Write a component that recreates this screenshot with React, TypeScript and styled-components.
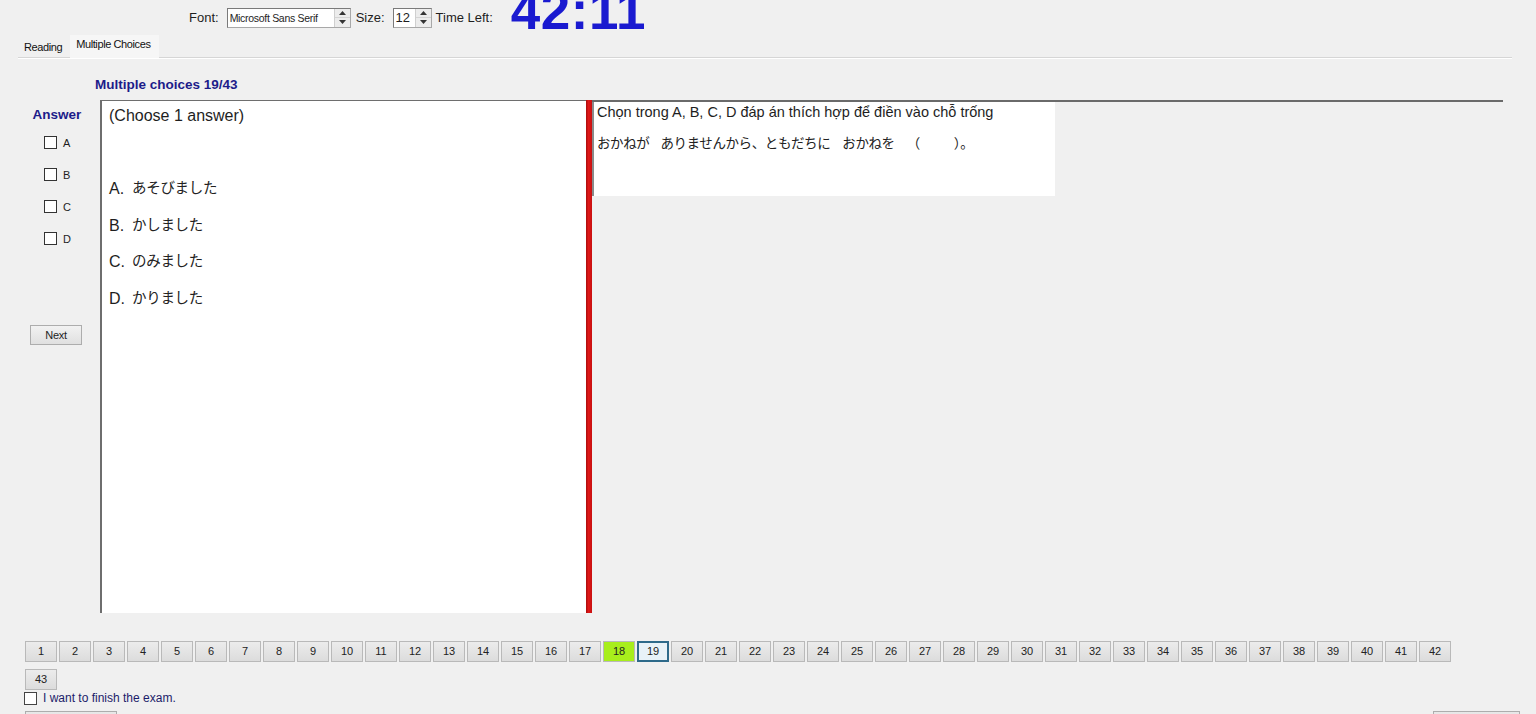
import React from 'react'
import styled, { createGlobalStyle } from 'styled-components'

const GlobalStyle = createGlobalStyle`
  html, body {
    margin: 0;
    padding: 0;
    background: #f0f0f0;
    overflow: hidden;
  }
  body {
    font-family: "Liberation Sans", Arial, sans-serif;
    color: #1e1e1e;
  }
`

const Page = styled.div`
  width: 1536px;
  height: 714px;
  display: flex;
  flex-direction: column;
  overflow: hidden;
  background: #f0f0f0;

  & > * {
    flex-shrink: 0;
  }
`

const TopBar = styled.div`
  height: 36px;
  display: flex;
  align-items: center;
  padding-left: 189px;
  font-size: 13px;
  color: #1e1e1e;
`

const TopLabel = styled.span<{ $ml?: number }>`
  margin-left: ${p => p.$ml ?? 0}px;
  margin-top: -1px;
`

const InputBox = styled.div<{ $w: number; $ml: number }>`
  width: ${p => p.$w}px;
  height: 20px;
  margin-left: ${p => p.$ml}px;
  margin-top: -1px;
  box-sizing: border-box;
  display: flex;
  background: #fff;
  border: 1px solid #a8a8a8;
  border-top-color: #7a7a7a;
  border-left-color: #7a7a7a;
`

const InputText = styled.span<{ $small?: boolean }>`
  flex: 1;
  font-size: ${p => (p.$small ? 10.5 : 13)}px;
  line-height: 18px;
  padding-left: 2px;
  letter-spacing: ${p => (p.$small ? '-0.3px' : '0')};
  white-space: nowrap;
  overflow: hidden;
`

const Spinner = styled.div`
  width: 15px;
  display: flex;
  flex-direction: column;
  background: #ececec;
  border-left: 1px solid #cfcfcf;
`

const SpinHalf = styled.div`
  flex: 1;
  display: flex;
  align-items: center;
  justify-content: center;
  border-bottom: 1px solid #d4d4d4;
  &:last-child { border-bottom: none; }
`

const Timer = styled.div`
  align-self: flex-start;
  margin-left: 18px;
  margin-top: -16px;
  font-size: 53px;
  line-height: 53px;
  font-weight: bold;
  color: #1a1ad0;
  letter-spacing: 0.5px;
`

const TabStrip = styled.div`
  height: 21px;
  margin: 0 24px 0 18px;
  display: flex;
  align-items: flex-end;
  border-bottom: 1px solid #d6d6d6;
  box-shadow: 0 1px 0 #ffffff;
`

const Tab = styled.div<{ $active?: boolean }>`
  font-size: 11px;
  letter-spacing: -0.4px;
  color: #111;
  padding: 0 8px 0 6px;
  height: ${p => (p.$active ? 23 : 17)}px;
  line-height: ${p => (p.$active ? 18 : 15)}px;
  background: ${p => (p.$active ? '#f6f6f6' : 'transparent')};
  margin-bottom: ${p => (p.$active ? -1 : 0)}px;
`

const TitleRow = styled.div`
  height: 42px;
  display: flex;
  align-items: center;
  padding-left: 95px;
  padding-top: 10px;
  box-sizing: border-box;
`

const Title = styled.span`
  font-weight: bold;
  font-size: 13.5px;
  color: #1c1c8a;
`

const Main = styled.div`
  height: 513px;
  display: flex;
`

const AnswerCol = styled.div`
  width: 100px;
  display: flex;
  flex-direction: column;
  align-items: center;
`

const AnswerTitle = styled.div`
  font-weight: bold;
  font-size: 13.5px;
  color: #1c1c8a;
  margin-top: 7px;
  margin-left: 14px;
`

const ChoiceList = styled.div`
  display: flex;
  flex-direction: column;
  gap: 19px;
  margin-top: 14px;
  align-self: flex-start;
  margin-left: 44px;
`

const ChoiceRow = styled.label`
  display: flex;
  align-items: center;
  gap: 6px;
  font-size: 11px;
  height: 13px;
`

const Box = styled.span`
  width: 11px;
  height: 11px;
  border: 1px solid #333;
  background: #fff;
  display: inline-block;
`

const NextButton = styled.div`
  margin-top: 80px;
  margin-left: 12px;
  width: 52px;
  height: 20px;
  box-sizing: border-box;
  border: 1px solid #adadad;
  background: linear-gradient(#f2f2f2, #e0e0e0);
  font-size: 11px;
  letter-spacing: -0.3px;
  line-height: 18px;
  text-align: center;
`

const QuestionBox = styled.div`
  width: 486px;
  box-sizing: border-box;
  background: #fff;
  border-left: 2px solid #6e6e6e;
  border-top: 1px solid #6e6e6e;
  padding: 5px 0 0 7px;
`

const Prompt = styled.div`
  font-size: 16px;
  line-height: 20px;
  margin-bottom: 43px;
`

const Option = styled.div`
  height: 36.5px;
  display: flex;
  align-items: center;
  font-size: 16px;
  line-height: 20px;
`

const OptionKey = styled.span`
  width: 23px;
  padding-top: 4px;
`

const Jp = styled.span`
  font-family: "Noto Sans CJK JP", "Liberation Sans", sans-serif;
  font-size: 14.5px;
  line-height: 20px;
  letter-spacing: -0.3px;
  color: #222;
`

const Splitter = styled.div`
  width: 6px;
  background: linear-gradient(90deg, #a80c0c, #e01818 40%, #c81010);
`

const RightArea = styled.div`
  width: 911px;
  border-top: 2px solid #6a6a6a;
  box-sizing: border-box;
`

const Passage = styled.div`
  width: 463px;
  height: 94px;
  background: #fff;
  box-sizing: border-box;
  padding: 1px 0 0 3px;
  border-left: 2px solid #8a8a8a;
`

const PassageLine = styled.div<{ $mt?: number }>`
  font-size: 14.5px;
  line-height: 18px;
  margin-top: ${p => p.$mt ?? 0}px;
  white-space: nowrap;
  display: flex;
  align-items: center;
`

const PassageJp = styled(Jp)`
  font-size: 13.5px;
  letter-spacing: -0.4px;
`

const Gap = styled.span<{ $w: number }>`
  display: inline-block;
  width: ${p => p.$w}px;
`

const Numbers = styled.div`
  margin: 28px 0 0 25px;
  width: 1430px;
  display: flex;
  flex-wrap: wrap;
  column-gap: 2px;
  row-gap: 7px;
`

const NumButton = styled.div<{ $state?: 'done' | 'current' }>`
  width: 32px;
  height: 21px;
  box-sizing: border-box;
  font-size: 11px;
  text-align: center;
  color: #222;
  border: ${p => (p.$state === 'current' ? '2px solid #2e6a8a' : '1px solid #b9b9b9')};
  line-height: ${p => (p.$state === 'current' ? 17 : 19)}px;
  background: ${p =>
    p.$state === 'done'
      ? '#a8ee1c'
      : p.$state === 'current'
      ? '#e8f2f8'
      : 'linear-gradient(#ececec, #dcdcdc)'};
`

const FinishRow = styled.label`
  margin: 1px 0 0 24px;
  display: flex;
  align-items: center;
  gap: 6px;
  font-size: 12px;
  color: #1c1c6a;
`

const FinishBox = styled(Box)`
  border-color: #444;
`

const BottomBar = styled.div`
  margin-top: 6px;
  display: flex;
  justify-content: space-between;
  padding: 0 16px 0 25px;
`

const BottomButton = styled.div<{ $w: number }>`
  width: ${p => p.$w}px;
  height: 22px;
  border: 1px solid #adadad;
  background: linear-gradient(#e8e8e8, #d8d8d8);
`

const Arrow = ({ up }: { up?: boolean }) => (
  <svg width="7" height="4" viewBox="0 0 7 4">
    <polygon points={up ? '0,4 7,4 3.5,0' : '0,0 7,0 3.5,4'} fill="#333" />
  </svg>
)

const SpinBox = () => (
  <Spinner>
    <SpinHalf><Arrow up /></SpinHalf>
    <SpinHalf><Arrow /></SpinHalf>
  </Spinner>
)

const options = [
  ['A.', 'あそびました'],
  ['B.', 'かしました'],
  ['C.', 'のみました'],
  ['D.', 'かりました'],
]

const App: React.FC = () => {
  const nums = Array.from({ length: 43 }, (_, i) => i + 1)
  return (
    <Page>
      <GlobalStyle />
      <TopBar>
        <TopLabel>Font:</TopLabel>
        <InputBox $w={124} $ml={8}>
          <InputText $small>Microsoft Sans Serif</InputText>
          <SpinBox />
        </InputBox>
        <TopLabel $ml={5}>Size:</TopLabel>
        <InputBox $w={39} $ml={8}>
          <InputText>12</InputText>
          <SpinBox />
        </InputBox>
        <TopLabel $ml={4}>Time Left:</TopLabel>
        <Timer>42:11</Timer>
      </TopBar>

      <TabStrip>
        <Tab>Reading</Tab>
        <Tab $active>Multiple Choices</Tab>
      </TabStrip>

      <TitleRow>
        <Title>Multiple choices 19/43</Title>
      </TitleRow>

      <Main>
        <AnswerCol>
          <AnswerTitle>Answer</AnswerTitle>
          <ChoiceList>
            {['A', 'B', 'C', 'D'].map(k => (
              <ChoiceRow key={k}>
                <Box />
                {k}
              </ChoiceRow>
            ))}
          </ChoiceList>
          <NextButton>Next</NextButton>
        </AnswerCol>

        <QuestionBox>
          <Prompt>(Choose 1 answer)</Prompt>
          {options.map(([k, v]) => (
            <Option key={k}>
              <OptionKey>{k}</OptionKey>
              <Jp>{v}</Jp>
            </Option>
          ))}
        </QuestionBox>

        <Splitter />

        <RightArea>
          <Passage>
            <PassageLine>Chọn trong A, B, C, D đáp án thích hợp để điền vào chỗ trống</PassageLine>
            <PassageLine $mt={11}>
              <PassageJp>おかねが</PassageJp>
              <Gap $w={11} />
              <PassageJp>ありませんから、ともだちに</PassageJp>
              <Gap $w={12} />
              <PassageJp>おかねを</PassageJp>
              <Gap $w={12} />
              <PassageJp>（</PassageJp>
              <Gap $w={34} />
              <PassageJp>）。</PassageJp>
            </PassageLine>
          </Passage>
        </RightArea>
      </Main>

      <Numbers>
        {nums.map(n => (
          <NumButton key={n} $state={n === 18 ? 'done' : n === 19 ? 'current' : undefined}>
            {n}
          </NumButton>
        ))}
      </Numbers>

      <FinishRow>
        <FinishBox />
        I want to finish the exam.
      </FinishRow>

      <BottomBar>
        <BottomButton $w={90} />
        <BottomButton $w={85} />
      </BottomBar>
    </Page>
  )
}

export default App
